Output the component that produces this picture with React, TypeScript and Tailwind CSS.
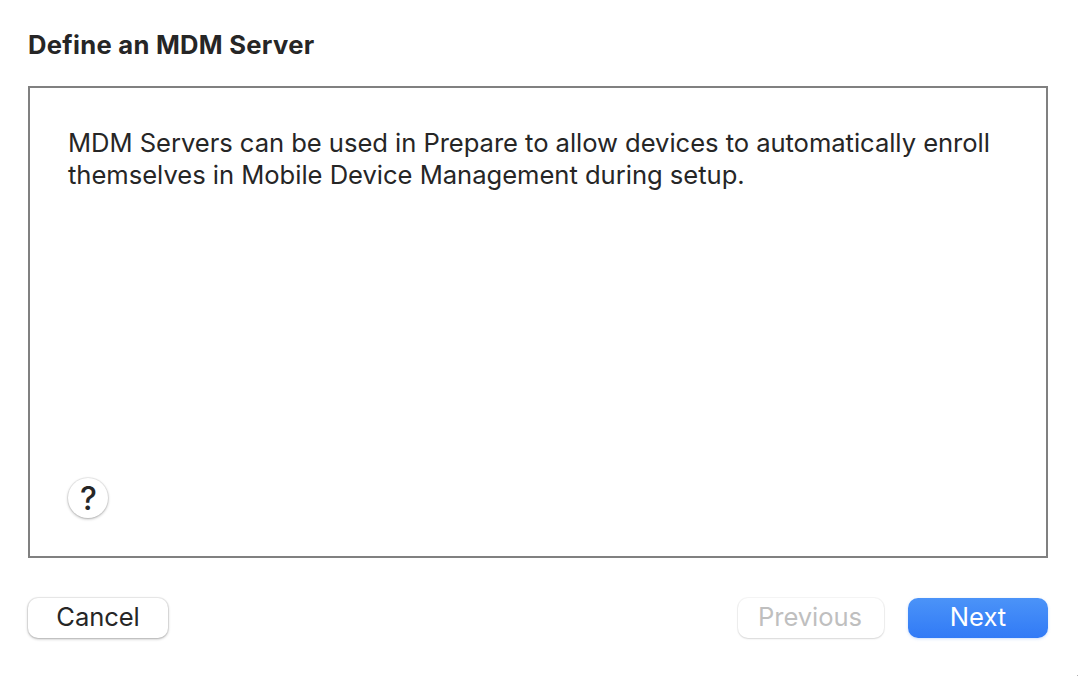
import React from 'react';

interface PushButtonProps {
    label: string;
    className: string;
    textClassName: string;
    disabled?: boolean;
}

const PushButton = ({ label, className, textClassName, disabled }: PushButtonProps) => (
    <button
        type="button"
        disabled={disabled}
        className={`flex h-10 shrink-0 items-center justify-center rounded-[10px] text-[25.6px] leading-8 ${className}`}
    >
        <span className={`whitespace-nowrap pb-[2px] ${textClassName}`}>{label}</span>
    </button>
);

export default function App() {
    return (
        <div className="relative flex h-[676px] w-[1078px] flex-col bg-white pt-[29px] pr-[30px] pl-7 font-['Inter',sans-serif] text-[#262626]">
            <h1 className="h-8 text-[25.6px] leading-8 font-bold tracking-[0.28px] whitespace-nowrap">
                Define an MDM Server
            </h1>

            {/* Assistant page */}
            <main className="mt-[25px] flex h-[472px] flex-col justify-between border-2 border-[#808080] pt-[39px] pr-4 pb-[38px] pl-[38px]">
                <p className="text-[25.6px] leading-8 whitespace-nowrap">
                    <span className="block tracking-[-0.05px]">
                        MDM Servers can be used in Prepare to allow devices to automatically enroll
                    </span>
                    <span className="block tracking-[-0.03px]">
                        themselves in Mobile Device Management during setup.
                    </span>
                </p>
                <button
                    type="button"
                    aria-label="Help"
                    className="flex size-10 items-center justify-center rounded-full bg-white pt-[2px] pl-px text-[32px] leading-8 font-[450] shadow-[0_0_0_1px_rgba(0,0,0,0.06),0_1px_3px_rgba(0,0,0,0.3)]"
                >
                    ?
                </button>
            </main>

            <footer className="mt-10 flex">
                <PushButton
                    label="Cancel"
                    className="w-[140px] bg-white shadow-[0_0_0_1px_rgba(0,0,0,0.06),0_1px_3px_rgba(0,0,0,0.3)]"
                    textClassName="tracking-[-0.1px]"
                />
                <PushButton
                    label="Previous"
                    disabled
                    className="ml-auto w-[146px] bg-white pr-[2px] text-[#bfbfbf] shadow-[0_0_0_1px_rgba(0,0,0,0.04),0_1px_2px_rgba(0,0,0,0.12)]"
                    textClassName="tracking-[-0.05px]"
                />
                <PushButton
                    label="Next"
                    className="ml-6 w-[140px] bg-linear-to-b from-[#4b93f8] to-[#317af6] text-white shadow-[0_1px_3px_rgba(49,122,246,0.25)]"
                    textClassName="tracking-[-0.05px]"
                />
            </footer>

            {/* Window corner */}
            <span className="absolute right-0 bottom-0 size-px bg-[#b0b0b0]" />
        </div>
    );
}
